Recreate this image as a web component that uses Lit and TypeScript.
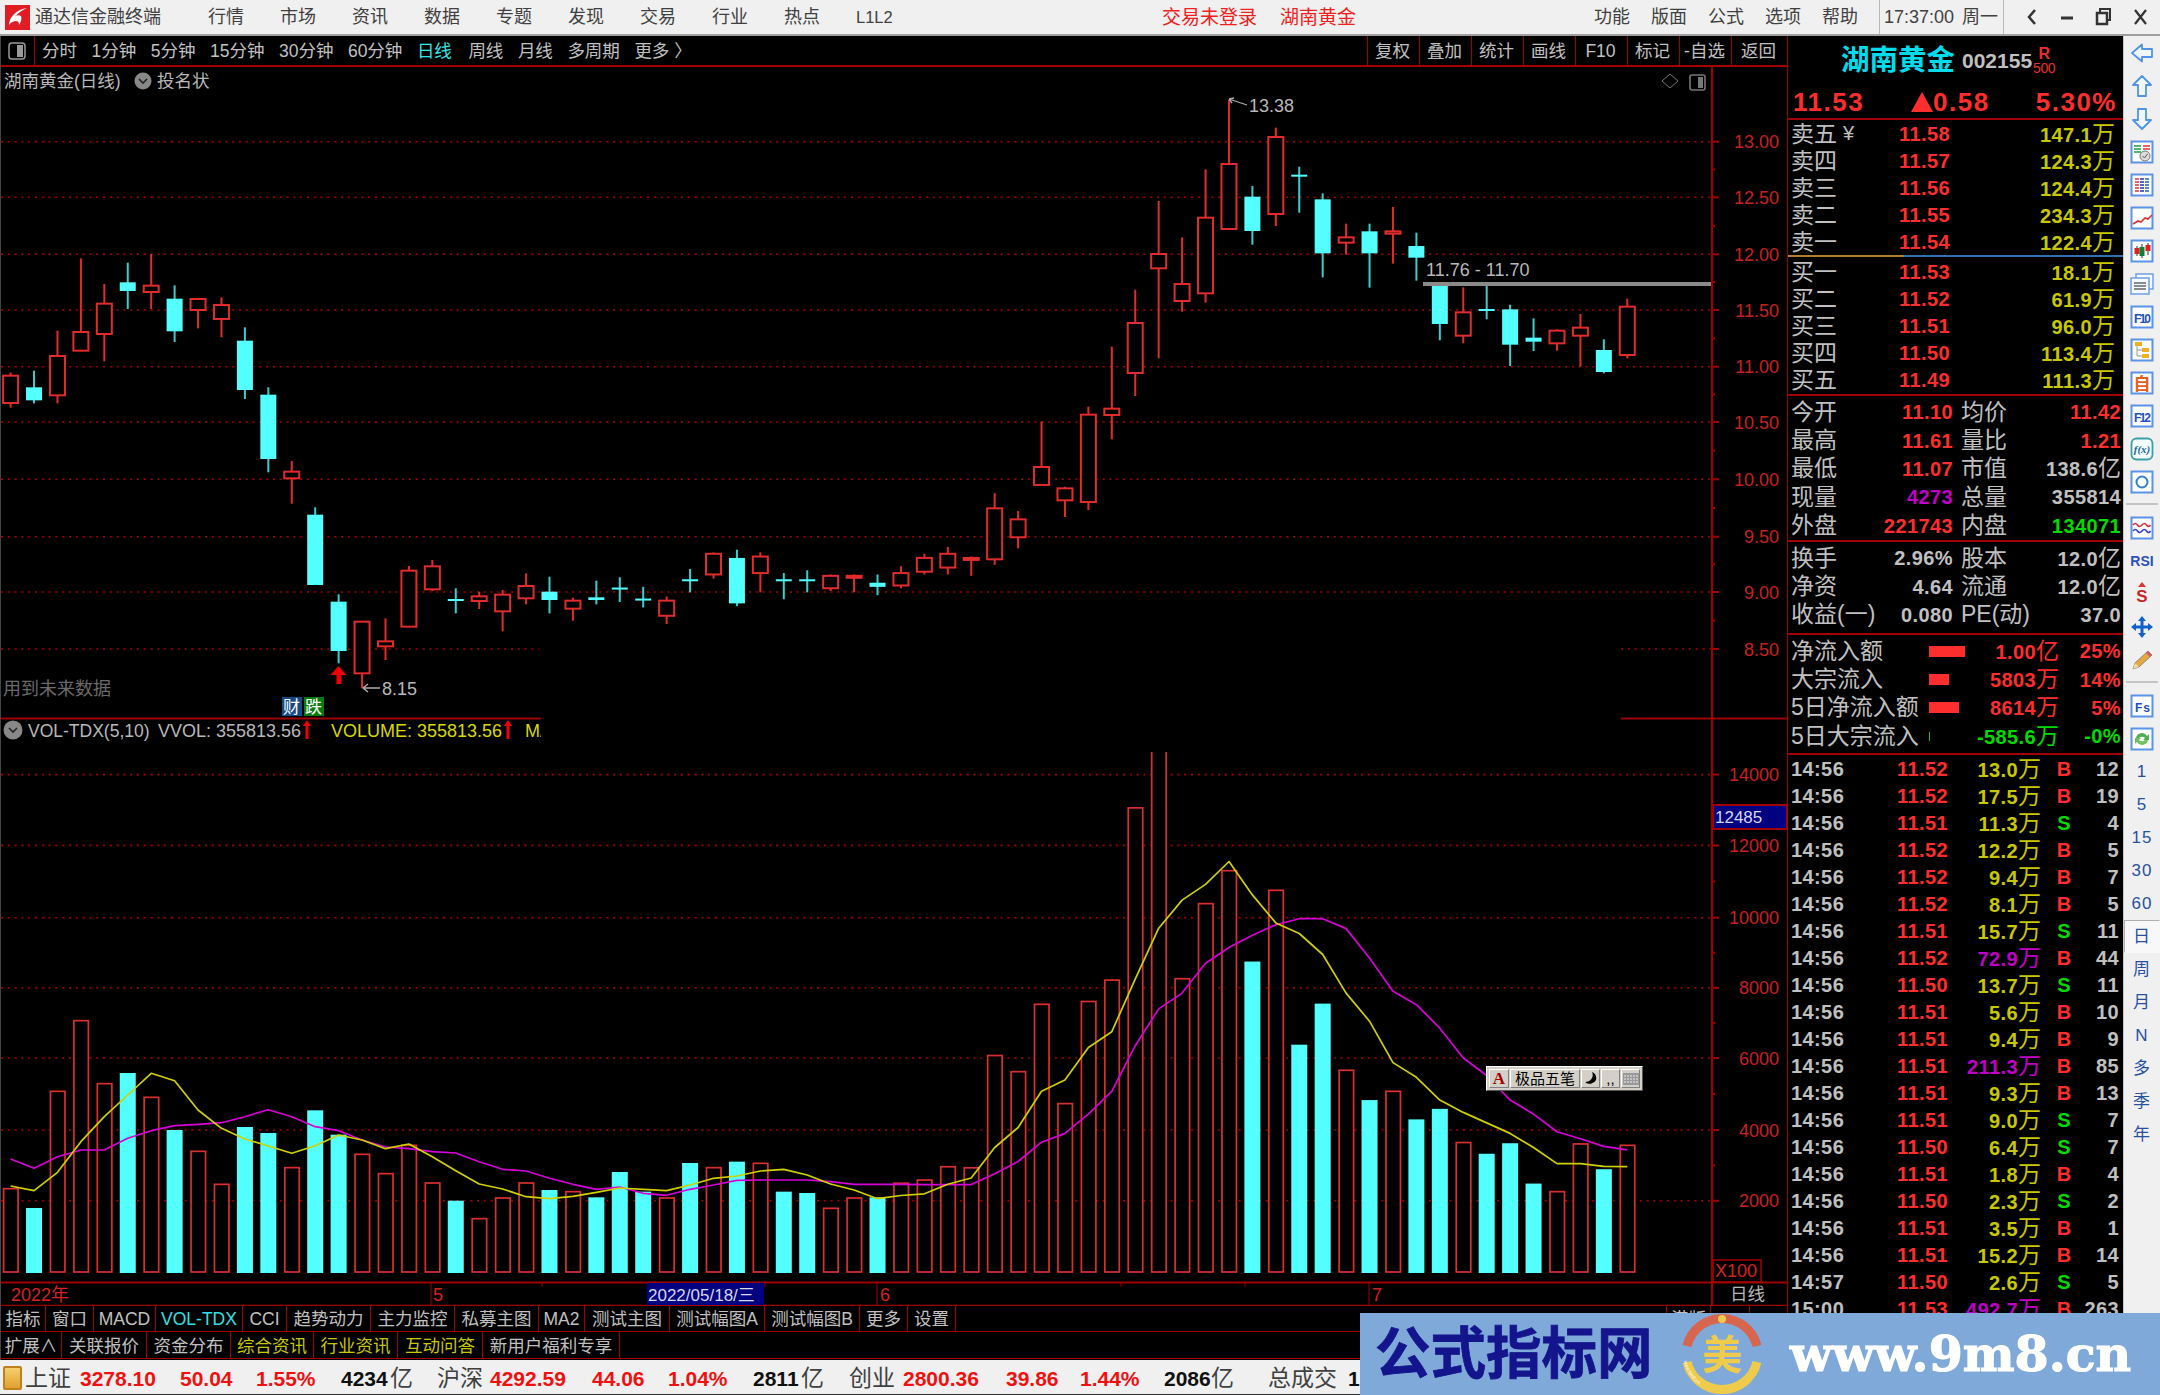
import { LitElement, html, css, svg } from 'lit';
import { customElement } from 'lit/decorators.js';

const z7 = (v: number) => 220 + v / 3;
const z8 = (v: number) => 80 + v / 3;
const sh = (v: number) => v * 1.3776;
type Cd = [number, number, number, number, number];
const cx = (i: number) => 9.6 + 23.43 * i;

// colour flag 1 = cyan (falling), 0 = red (rising); hi, top, bottom, lo
const c7: Cd[] = [
  [0,458,467,549,563],[1,452,502,541,550],[0,332,408,526,550],[0,115,336,392,392],[0,192,251,342,424],
  [1,128,187,213,267],[0,102,197,216,267],[1,196,236,334,366],[0,237,237,270,325],[0,232,255,297,352],
  [1,322,362,510,537],[1,502,524,717,757],[0,723,755,775,851],[1,862,884,1095,1095],[1,1123,1145,1293,1330],
  [0,1205,1205,1360,1405],[0,1195,1264,1279,1320],[0,1038,1052,1220,1220],[0,1020,1039,1108,1113],[1,1105,1137,1139,1180],
  [0,1115,1129,1143,1167],[0,1110,1124,1174,1234],[0,1060,1098,1135,1153],[1,1070,1115,1140,1180],[0,1133,1142,1166,1202],
  [1,1082,1132,1140,1153],
];
const cS: Cd[] = [
  [1,419,426.5,427.5,437],[1,426,434.5,435.5,441],[0,433,436,447,453],[1,413,420.5,421.5,430],[0,401,402,417,420],
  [1,399,405,438,440],[0,401,404,416,430],[1,416,420.5,421.5,435],[1,414,420.5,421.5,430],[0,417,418,427,429],
  [0,417,418,419,430],[1,417,423,426,432],[0,411,416,425,427],[0,402,405,415,417],[0,397,402,412,417],
  [0,404,405,406,418],[0,358,369,406,410],[0,371,377,390,398],[0,306,339,352,352],
];
const c8: Cd[] = [
  [0,1220,1225,1261,1311],[0,980,1004,1266,1290],[0,800,986,1005,1078],[0,629,729,879,948],[0,363,522,565,835],
  [0,472,612,663,695],[0,268,413,640,668],[0,60,252,447,447],[1,318,350,453,494],[0,143,171,402,438],
  [1,260,284,290,398],[1,340,358,520,592],[0,431,472,488,524],[1,431,454,520,623],[0,381,454,461,551],
  [1,458,498,533,602],[1,618,618,732,781],[0,622,697,767,790],[1,618,687,691,718],[1,674,688,794,858],
  [1,715,773,785,813],[0,748,752,790,812],[0,702,743,767,860],[1,778,810,876,880],[0,656,680,825,835],
];
const conv = (a: Cd[], f: (v: number) => number): Cd[] => a.map(c => [c[0], f(c[1]), f(c[2]), f(c[3]), f(c[4])]);
const candles: Cd[] = [...conv(c7, z7), ...conv(cS, sh), ...conv(c8, z8)];

const z9y = (v: number) => 960 + v / 3;
const z10y = (v: number) => 730 + v * 0.3508;
const volA = [686,744,394,182,371,339,412,510,574,673,501,519,623,451,524,583,641,556,669,722,776,714,669,690,695,712,636,695,714,609,623,605,610,695,699,745,714,712].map(z9y);
const volB = [1292,1283,1245,1248,928,974,782,1065,774,713,222,40,709,495,401,660,457,897,780,970,1055,1030,1110,1080,1176,1208,1178,1293,1316,1180,1252,1184].map(z10y);
const vols = [...volA, ...volB];
const maYellow = [...[678,692,637,545,470,405,340,362,450,505,537,558,580,557,525,540,566,552,590,632,672,687,710,716,709,697,684,688,692,675,655,648,633,628,645,672,690,716].map(z9y),
  ...[1327,1322,1295,1277,1190,1133,1030,998,905,860,710,565,485,440,375,470,550,580,640,750,830,948,990,1055,1090,1120,1150,1190,1236,1236,1244,1245].map(z10y)];
const maPurple = [...[597,625,590,570,570,535,512,497,493,488,470,449,470,500,512,540,561,566,575,579,605,628,633,655,673,688,681,700,706,688,675,661,660,660,660,665,673,673].map(z9y),
  ...[1295,1296,1296,1296,1265,1230,1175,1150,1095,1030,900,795,750,665,620,585,555,538,538,566,650,745,783,850,935,985,1055,1095,1145,1165,1187,1197].map(z10y)];

const priceAxis: [string, number][] = [['13.00',141.7],['12.50',197.3],['12.00',254.3],['11.50',310],['11.00',366.7],['10.50',422],['10.00',479.3],['9.50',536.7],['9.00',592],['8.50',649]];
const volAxis: [string, number][] = [['14000',774.6],['12000',845.4],['10000',917.7],['8000',987.8],['6000',1058],['4000',1130],['2000',1200.8]];

const book = {
  sell: [['卖五','11.58','147.1万'],['卖四','11.57','124.3万'],['卖三','11.56','124.4万'],['卖二','11.55','234.3万'],['卖一','11.54','122.4万']],
  buy: [['买一','11.53','18.1万'],['买二','11.52','61.9万'],['买三','11.51','96.0万'],['买四','11.50','113.4万'],['买五','11.49','111.3万']],
};
const info1 = [
  ['今开','11.10','red','均价','11.42','red'],['最高','11.61','red','量比','1.21','red'],['最低','11.07','red','市值','138.6亿','gray'],
  ['现量','4273','mag','总量','355814','gray'],['外盘','221743','red','内盘','134071','grn'],
];
const info2 = [['换手','2.96%','gray','股本','12.0亿','gray'],['净资','4.64','gray','流通','12.0亿','gray'],['收益(一)','0.080','gray','PE(动)','37.0','gray']];
const flows: [string, number, string, string, string][] = [
  ['净流入额',36,'1.00亿','25%','red'],['大宗流入',20,'5803万','14%','red'],['5日净流入额',30,'8614万','5%','red'],['5日大宗流入',1,'-585.6万','-0%','grn'],
];
const trades = [
  ['14:56','11.52','13.0万','B','12'],['14:56','11.52','17.5万','B','19'],['14:56','11.51','11.3万','S','4'],['14:56','11.52','12.2万','B','5'],
  ['14:56','11.52','9.4万','B','7'],['14:56','11.52','8.1万','B','5'],['14:56','11.51','15.7万','S','11'],['14:56','11.52','72.9万','B','44'],
  ['14:56','11.50','13.7万','S','11'],['14:56','11.51','5.6万','B','10'],['14:56','11.51','9.4万','B','9'],['14:56','11.51','211.3万','B','85'],
  ['14:56','11.51','9.3万','B','13'],['14:56','11.51','9.0万','S','7'],['14:56','11.50','6.4万','S','7'],['14:56','11.51','1.8万','B','4'],
  ['14:56','11.50','2.3万','S','2'],['14:56','11.51','3.5万','B','1'],['14:56','11.51','15.2万','B','14'],['14:57','11.50','2.6万','S','5'],['15:00','11.53','492.7万','B','263'],
];
const magentaVols = new Set(['72.9万','211.3万','492.7万']);

const tab1: [string, number, string][] = [['指标',45,''],['窗口',48,''],['MACD',62,''],['VOL-TDX',87,'cy'],['CCI',44,''],['趋势动力',84,''],['主力监控',84,''],['私募主图',84,''],['MA2',46,''],['测试主图',85,''],['测试幅图A',95,''],['测试幅图B',95,''],['更多',48,''],['设置',48,'']];
const tab2: [string, number, string][] = [['扩展∧',61,''],['关联报价',85,''],['资金分布',84,''],['综合资讯',83,'yl'],['行业资讯',84,'yl'],['互动问答',85,'yl'],['新用户福利专享',137,'']];
const status: [string, number, string][] = [['上证',25,'lbl'],['3278.10',80,'r'],['50.04',180,'r'],['1.55%',256,'r'],['4234',341,'k'],['亿',390,'lbl'],['沪深',437,'lbl'],['4292.59',490,'r'],['44.06',592,'r'],['1.04%',668,'r'],['2811',753,'k'],['亿',801,'lbl'],['创业',849,'lbl'],['2800.36',903,'r'],['39.86',1006,'r'],['1.44%',1080,'r'],['2086',1164,'k'],['亿',1211,'lbl'],['总成交',1268,'lbl'],['1',1348,'k']];

const box = (inner: unknown) => svg`<rect x="1.5" y="1.5" width="21" height="21" fill="#fff" stroke="#5b93e6" stroke-width="2"/>${inner}`;
const arrow = (d: string) => svg`<path d=${d} fill="#f2f7ff" stroke="#4e94ea" stroke-width="1.8" stroke-linejoin="round"/>`;
const icons: unknown[] = [
  arrow('M2 12 L12 3.5 V8 H22 V16 H12 V20.5 Z'),
  arrow('M12 2 L21 11 H16 V22 H8 V11 H3 Z'),
  arrow('M12 22 L21 13 H16 V2 H8 V13 H3 Z'),
  box(svg`<path d="M4 6h7M4 9h7M4 12h7" stroke="#1a9a3a" stroke-width="1.6"/><path d="M13 6h7M13 9h7" stroke="#e03030" stroke-width="1.6"/><circle cx="15" cy="16" r="5" fill="#ddd" stroke="#777"/><path d="M12.5 16l2 2 3-4" stroke="#555" fill="none"/>`),
  box(svg`<path d="M5 6h4M5 9h4M5 12h4M5 15h4M5 18h4" stroke="#e03030" stroke-width="1.7" /><path d="M10 6h4M10 9h4M10 12h4M10 15h4M10 18h4" stroke="#2030c0" stroke-width="1.7"/><path d="M15 6h4M15 9h4M15 12h4M15 15h4M15 18h4" stroke="#2060d0" stroke-width="1.7"/>`),
  box(svg`<path d="M3 18l5-3 3 1 4-4 3 1 4-4" fill="none" stroke="#e03030" stroke-width="1.6"/>`),
  box(svg`<path d="M7 7v10M12 5v14M18 4v12" stroke="#333"/><rect x="4.5" y="9" width="5" height="6" fill="#e02020"/><rect x="9.5" y="8" width="5" height="9" fill="#108030"/><rect x="15.5" y="6" width="5" height="6" fill="#e02020"/>`),
  svg`<rect x="6" y="2" width="17" height="15" fill="#f6f9ff" stroke="#6ea0e6" stroke-width="1.5"/><rect x="1" y="6" width="18" height="16" fill="#f6f9ff" stroke="#6ea0e6" stroke-width="1.5"/><path d="M4 11h12M4 14h12M4 17h12" stroke="#666" stroke-width="1.6"/>`,
  box(svg`<text class="ict" x="4" y="17.5" textLength="17">F10</text>`),
  box(svg`<rect x="5" y="4" width="7" height="4" fill="#f0b020"/><path d="M7 8v10h5M7 12h5" stroke="#999" fill="none"/><rect x="12" y="10" width="7" height="4" fill="#f0b020"/><rect x="12" y="16" width="7" height="4" fill="#f0b020"/>`),
  box(svg`<text class="icz" x="12" y="19" text-anchor="middle">自</text>`),
  box(svg`<text class="ict" x="4" y="17.5" textLength="17">F12</text>`),
  svg`<rect x="1.5" y="1.5" width="21" height="21" rx="5" fill="#f4ffff" stroke="#3aa0a8" stroke-width="1.8"/><text class="icf" x="12" y="16" text-anchor="middle">f(x)</text>`,
  box(svg`<circle cx="12" cy="12" r="5.5" fill="none" stroke="#2e7fd8" stroke-width="2"/>`),
  null,
  box(svg`<path d="M3 9q2.5-3 4.5 0t4.5 0 4.5 0 4 0" fill="none" stroke="#e03030" stroke-width="1.6"/><path d="M3 15q2.5-3 4.5 0t4.5 0 4.5 0 4 0" fill="none" stroke="#3040d0" stroke-width="1.6"/>`),
  svg`<text class="icr" x="12" y="17" text-anchor="middle">RSI</text>`,
  svg`<path d="M12 0l4 5h-8z" fill="#e03030"/><text class="ics" x="12" y="20" text-anchor="middle">S</text>`,
  svg`<path d="M12 1l4 5h-2.5v4.5H18V8l5 4-5 4v-2.5h-4.5V18H16l-4 5-4-5h2.5v-4.5H6V16l-5-4 5-4v2.5h4.5V6H8z" fill="#1060d0"/>`,
  svg`<path d="M3 21l2-6L18 3l4 4L9 19z" fill="#e8a840" stroke="#888"/><path d="M3 21l2-6 4 4z" fill="#f4d8a0"/><path d="M18 3l4 4-2 2-4-4z" fill="#d06060"/>`,
  null,
  box(svg`<text class="ict" x="5" y="17.5" textLength="15">Fs</text>`),
  box(svg`<path d="M6 11a6 6 0 0 1 11-2l2-2v6h-6l2-2a4 4 0 0 0-6 0z" fill="#50b050"/><path d="M18 13a6 6 0 0 1-11 2l-2 2v-6h6l-2 2a4 4 0 0 0 6 0z" fill="#70c060"/>`),
];
const sideText = ['1','5','15','30','60','日','周','月','N','多','季','年'];

@customElement('app-root')
export class AppRoot extends LitElement {
  static styles = css`
    :host { display: block; width: 2160px; height: 1395px; overflow: hidden; position: relative; background: #000; line-height: 1;
      font-family: "Liberation Sans", "Noto Sans CJK SC", sans-serif; color: #c0c0c0; }
    * { box-sizing: border-box; }
    .title { height: 36px; background: #f0f0f0; border-bottom: 2px solid #a0a0a0; display: flex; align-items: center; color: #404040; font-size: 18px; padding-left: 5px; }
    .logo { width: 25px; height: 25px; flex: none; display: block; }
    .appname { width: 173px; margin-left: 5px; letter-spacing: 0; }
    .menu { width: 954px; display: flex; gap: 36px; align-items: center; }
    .menu .sm { font-size: 16.5px; }
    .alert { width: 432px; display: flex; gap: 23px; color: #f02020; font-size: 19px; }
    .funcs { width: 285px; display: flex; gap: 21px; }
    .clock { width: 125px; height: 34px; display: flex; align-items: center; gap: 8px; border-left: 1px solid #b8b8b8; border-right: 1px solid #b8b8b8; padding-left: 4px; }
    .win { flex: 1; display: flex; align-items: center; }
    .win svg { display: block; }

    .main { display: flex; height: 1324px; }
    .left { width: 1787px; flex: none; display: flex; flex-direction: column; border-left: 1px solid #444; }
    .bar { height: 31px; flex: none; display: flex; align-items: stretch; border-bottom: 2px solid #a00000; font-size: 17.5px; }
    .bar-ic { width: 34px; border-right: 1px solid #a00000; display: flex; align-items: center; padding-left: 7px; }
    .bar-items { display: flex; gap: 14.5px; align-items: center; padding: 2px 0 0 7px; }
    .on { color: #30e8e8; margin-right: 2px; }
    .bar-btns { margin-left: auto; display: flex; }
    .bar-btns span { width: 52px; border-left: 1px solid #a00000; display: flex; align-items: center; justify-content: center; padding: 2px 2px 0 0; }
    .bar-btns span:last-child { width: 56px; }
    .chart { position: relative; height: 1239px; flex: none; }
    .chart svg { display: block; }
    .ime { position: absolute; left: 1485px; top: 999px; width: 157px; height: 25px; background: #d4d0c8; border: 1px solid; border-color: #fff #555 #555 #fff; display: flex; padding: 2px; gap: 1px; align-items: stretch; color: #000; font-size: 15px; }
    .ime span { border: 1px solid; border-color: #fff #808080 #808080 #fff; display: flex; align-items: center; justify-content: center; }
    .ime .a { width: 20px; color: #a00000; font-weight: bold; font-family: "Liberation Serif", serif; font-size: 17px; }
    .ime .t { width: 70px; }
    .ime .m { width: 19px; }
    .ime .k { flex: 1; }
    .tabs { height: 26px; flex: none; display: flex; border-bottom: 1px solid #a00000; font-size: 17.5px; }
    .tabs.second { height: 27px; }
    .tabs span { border-right: 1px solid #a00000; display: flex; align-items: center; justify-content: center; white-space: nowrap; padding-top: 2px; }
    .tabs.second span { padding-top: 3px; }
    .tabs .cy { color: #30e0e8; }
    .tabs .yl { color: #c8c800; }
    .tabs .gap { flex: 1; border-right: none; }
    .tabs .c1 { width: 45px; border-left: 1px solid #a00000; }
    .tabs .c2 { width: 39px; }
    .tabs .c3 { width: 37px; border-right: none; }

    .panel { width: 336px; flex: none; border-left: 1px solid #a00000; font-size: 23px; overflow: hidden; }
    .p-title { height: 49px; display: flex; align-items: center; padding-left: 53px; }
    .p-name { color: #00dcec; font-size: 28.5px; font-weight: bold; }
    .p-code { font-size: 21px; font-weight: bold; color: #c0c0c0; margin-left: 7px; letter-spacing: 0; }
    .p-rr { display: flex; flex-direction: column; align-items: center; color: #e83030; margin-left: 1px; line-height: 14px; }
    .p-rr b { font-size: 16px; }
    .p-rr i { font-style: normal; font-size: 14px; letter-spacing: -.4px; }
    .p-price { height: 35px; display: grid; grid-template-columns: 118px 124px 82px; padding-left: 5px; align-items: center; border-bottom: 2px solid #a00000; color: #ff2e2e; font-size: 26px; font-weight: bold; letter-spacing: 1.5px; }
    .p-price .mid { display: flex; align-items: center; gap: 0; }
    .tri { width: 0; height: 0; border-left: 11px solid transparent; border-right: 11px solid transparent; border-bottom: 20px solid #ff2e2e; }
    .p-price .end { text-align: right; }
    .row { display: flex; align-items: center; white-space: nowrap; }
    .bk { height: 27px; display: grid; grid-template-columns: 108px 54px 162px; grid-template-rows: 27px; padding-left: 3px; align-items: center; }
    .lbl { display: flex; gap: 6px; align-items: center; }
    .yen { font-size: 20px; margin-top: -2px; }
    .num { font-size: 20px; font-weight: bold; letter-spacing: .4px; white-space: nowrap; }
    .right { justify-self: end; text-align: right; }
    .red { color: #ff2e2e; } .yel { color: #c8c800; } .grn { color: #00dc00; } .mag { color: #c000c8; } .gray { color: #c0c0c0; }
    .wan { font-size: 23px; font-weight: normal; letter-spacing: 0; }
    .sep { height: 2px; background: linear-gradient(to right, #b08030 0 116px, #3070b0 116px); }
    .sec { border-bottom: 2px solid #a00000; }
    .sell { height: 135px; padding-top: .5px; }
    .buy { height: 139px; padding-top: 1.5px; }
    .inf { height: 28.4px; display: grid; grid-template-columns: 162px 160px; grid-template-rows: 28.4px; column-gap: 8px; padding-left: 3px; align-items: center; }
    .inf > div { display: flex; justify-content: space-between; align-items: center; }
    .sec.s1 { height: 146px; padding-top: 2px; }
    .sec.s2 { height: 93px; padding-top: 2px; }
    .sec.s3 { height: 120px; padding-top: 2px; }
    .fl { height: 28.4px; display: grid; grid-template-columns: 138px 52px 78px 62px; grid-template-rows: 28.4px; padding-left: 3px; align-items: center; }
    .flb { height: 11px; background: #ff2e2e; }
    .flb.grn { background: #20c020; height: 9px; }
    .tr { height: 27px; display: grid; grid-template-columns: 62px 95px 93px 46px 32px; grid-template-rows: 27px; padding-left: 3px; align-items: center; }
    .tr .t { font-size: 20px; font-weight: bold; color: #c0c0c0; letter-spacing: .4px; }
    .tr .b { text-align: center; font-size: 20px; font-weight: bold; }
    .trs { padding-top: .5px; }

    .side { flex: 1; background: #f0f0f0; border-left: 1px solid #c8c8c8; display: flex; flex-direction: column; align-items: center; }
    .si { height: 33px; width: 100%; flex: none; display: flex; align-items: center; justify-content: center; }
    .si svg { display: block; width: 24px; height: 24px; }
    .side hr { width: 32px; height: 2px; border: none; background: #c4c4c4; margin: 5px 0 6px; flex: none; }
    .st { color: #2850a0; font-size: 17px; letter-spacing: 1px; }
    .st.sel { background: #f8f8f8; border: 1px solid; border-color: #b0b0b0 #f8f8f8 #f8f8f8 #b0b0b0; }
    .ict { fill: #2050c0; font: bold 12px "Liberation Sans", sans-serif; }
    .icz { fill: #e06020; font: bold 17px "Noto Sans CJK SC", sans-serif; }
    .icf { fill: #206898; font: italic bold 11px "Liberation Serif", serif; }
    .icr { fill: #2e50b8; font: bold 14px "Liberation Sans", sans-serif; }
    .ics { fill: #c02828; font: bold 17px "Liberation Sans", sans-serif; }

    .status { height: 35px; background: #f0f0f0; border-bottom: 1px solid #303030; display: flex; align-items: center; padding: 2px 0 0 3px; overflow: hidden; }
    .sicon { width: 19px; height: 24px; flex: none; background: linear-gradient(#f4d070, #e0a030); border: 2px solid #c08020; border-radius: 2px; margin-right: 3px; }
    .status span { white-space: nowrap; flex: none; }
    .status .lbl { color: #404040; font-size: 23px; }
    .status .r { color: #f01010; font-size: 21px; font-weight: bold; }
    .status .k { color: #101010; font-size: 21px; font-weight: bold; }

    .wm { position: absolute; left: 1360px; top: 1313px; width: 800px; height: 82px; background: #7fa9d9; display: flex; align-items: center; padding-left: 15px; }
    .wm-t { color: #14148c; font-size: 55.5px; font-weight: bold; -webkit-text-stroke: .8px #14148c; width: 280px; flex: none; line-height: 82px; white-space: nowrap; }
    .wm svg { flex: none; margin-left: 26px; display: block; }
    .wm-u { color: #fff; font-family: "DejaVu Serif", serif; font-weight: bold; font-size: 49px; margin-left: 27px; white-space: nowrap; -webkit-text-stroke: 1.2px #fff; }

    text { font-family: "Liberation Sans", "Noto Sans CJK SC", sans-serif; }
    .ax { fill: #c82020; font-size: 18px; }
    .tx { fill: #b8b8b8; font-size: 18px; }
    .txc { fill: #b8b8b8; font-size: 17.5px; }
    .dim { fill: #6a6a6a; font-size: 18px; }
    .yl2 { fill: #d8d800; font-size: 18px; }
    .gy2 { fill: #b8b8b8; font-size: 18px; }
    .gy3 { fill: #b8b8b8; font-size: 17.5px; }
    .dt { fill: #d8d8e8; font-size: 17px; }
    .rd { fill: #d82020; font-size: 18px; }
    .wh { fill: #fff; font-size: 17px; }
    .tiny { fill: #fff; font-size: 5px; }
    .wmc { fill: #eecb4a; font-size: 40px; font-weight: bold; font-family: "Noto Sans CJK SC", sans-serif; }
  `;

  private candleSvg() {
    return candles.map((c, i) => {
      const x = cx(i);
      const col = c[0] ? '#54ffff' : '#e02c2c';
      const wick = c[0] ? '#36d0d0' : '#e02c2c';
      const h = Math.max(c[3] - c[2], 2);
      return svg`
        <line x1=${x} x2=${x} y1=${c[1]} y2=${c[4]} stroke=${wick} stroke-width="2"/>
        ${c[0]
          ? svg`<rect x=${x - 8} y=${c[2]} width="16" height=${h} fill=${col}/>`
          : svg`<rect x=${x - 7.5} y=${c[2]} width="15" height=${h} fill="#000" stroke=${col} stroke-width="2"/>`}`;
    });
  }

  private volSvg() {
    return vols.map((top, i) => {
      const x = cx(i);
      const up = !candles[i][0];
      return up
        ? svg`<rect x=${x - 7} y=${top} width="14.5" height=${1272 - top} fill="#000" stroke="#d83030" stroke-width="1.7"/>`
        : svg`<rect x=${x - 8} y=${top} width="16" height=${1273 - top} fill="#54ffff"/>`;
    });
  }

  private poly(arr: number[], col: string) {
    const pts = arr.map((y, i) => `${cx(i).toFixed(1)},${y.toFixed(1)}`).join(' ');
    return svg`<polyline points=${pts} fill="none" stroke=${col} stroke-width="1.7" stroke-linejoin="round"/>`;
  }

  private chartSvg() {
    const ticks = (a: [string, number][]) => a.map(([t, y], i) => svg`
      <line x1="1711" x2="1718" y1=${y} y2=${y} stroke="#a00000" stroke-width="2"/>
      <text class="ax" x="1778" y=${y + 6.5} text-anchor="end">${t}</text>
      ${i < a.length - 1 ? svg`<line x1="1711" x2="1714" y1=${(y + a[i + 1][1]) / 2} y2=${(y + a[i + 1][1]) / 2} stroke="#a00000" stroke-width="2"/>` : ''}`);
    const grid = (y: number, x1 = 0, x2 = 1710) => svg`<line x1=${x1} x2=${x2} y1=${y} y2=${y} stroke="#a80000" stroke-width="1.6" stroke-dasharray="2 4.8"/>`;
    return svg`
      <svg xmlns="http://www.w3.org/2000/svg" width="1786" height="1239" viewBox="0 67 1786 1239">
        <defs><clipPath id="volclip"><rect x="0" y="752" width="1710" height="530"/></clipPath></defs>
        ${priceAxis.filter(p => p[0] !== '8.50').map(p => grid(p[1]))}
        ${grid(649, 0, 538)}${grid(649, 1620, 1710)}
        ${volAxis.map(p => grid(p[1]))}
        <text class="txc" x="3" y="87">湖南黄金(日线)</text>
        <circle cx="142" cy="81" r="8.5" fill="#888"/><path d="M138 79l4 4 4-4" fill="none" stroke="#222" stroke-width="1.6"/>
        <text class="txc" x="156" y="87">投名状</text>
        <path d="M1669 74l8 7-8 7-8-7z" fill="none" stroke="#777"/>
        <rect x="1689" y="75" width="15" height="15" rx="2" fill="none" stroke="#777" stroke-width="1.6"/><rect x="1697" y="77" width="5" height="11" fill="#777"/>
        <line x1="1711" x2="1711" y1="67" y2="1306" stroke="#a00000" stroke-width="2"/>

        ${this.candleSvg()}
        <line x1="1422" x2="1710" y1="284" y2="284" stroke="#8a8a8a" stroke-width="4"/>
        <text class="tx" x="1425" y="276">11.76 - 11.70</text>
        <path d="M1228 99l5-1m-5 1l3 4m-3-4l18 6" fill="none" stroke="#aaa" stroke-width="1.3"/>
        <text class="tx" x="1248" y="112">13.38</text>
        <path d="M362 688h17M362 688l5-4m-5 4l5 4" fill="none" stroke="#aaa" stroke-width="1.6"/>
        <text class="tx" x="381" y="695">8.15</text>
        <path d="M337.5 666l8 9h-5v9h-5v-9h-6z" fill="#f00000"/>
        <text class="dim" x="2" y="694.5">用到未来数据</text>
        <rect x="281" y="697" width="20" height="19" fill="#154a86"/><text class="wh" x="282" y="713">财</text>
        <rect x="303" y="697" width="20" height="19" fill="#0a7a10"/><text class="wh" x="304" y="713">跌</text>

        <line x1="0" x2="1786" y1="718.5" y2="718.5" stroke="#a00000" stroke-width="2"/>
        <circle cx="12" cy="730" r="9.5" fill="#888"/><path d="M8 728l4 4 4-4" fill="none" stroke="#222" stroke-width="1.6"/>
        <text class="gy3" x="27" y="736.5">VOL-TDX(5,10)</text>
        <text class="gy2" x="157" y="736.5">VVOL: 355813.56</text>
        <path d="M306 720l4 6h-2.5v13h-3v-13H302z" fill="#f00000"/>
        <text class="yl2" x="330" y="736.5">VOLUME: 355813.56</text>
        <path d="M507 720l4 6h-2.5v13h-3v-13H503z" fill="#f00000"/>
        <text class="yl2" x="524" y="736.5">MA5: 294722.63</text>
        <rect x="540" y="705" width="1080" height="40" fill="#000"/>

        <g clip-path="url(#volclip)">${this.volSvg()}${this.poly(maPurple, '#d800d8')}${this.poly(maYellow, '#d0d000')}</g>

        ${ticks(priceAxis)}${ticks(volAxis)}
        <rect x="1712" y="805" width="74" height="24" fill="#000080" stroke="#a00000" stroke-width="2"/>
        <text class="dt" x="1714" y="822.5">12485</text>
        <rect x="1712" y="1260" width="48" height="22" fill="none" stroke="#a00000" stroke-width="1.5"/>
        <text class="rd" x="1714" y="1277">X100</text>

        <line x1="0" x2="1786" y1="1282.5" y2="1282.5" stroke="#a00000" stroke-width="2"/>
        <line x1="0" x2="1786" y1="1305.5" y2="1305.5" stroke="#a00000" stroke-width="1.5"/>
        <rect x="646" y="1283" width="117" height="22" fill="#000080"/>
        <text class="rd" x="10" y="1301">2022年</text>
        <line x1="430" x2="430" y1="1283" y2="1305" stroke="#a00000"/><text class="rd" x="432" y="1301">5</text>
        <text class="dt" x="647" y="1300.5">2022/05/18/三</text>
        <line x1="876" x2="876" y1="1283" y2="1305" stroke="#a00000"/><text class="rd" x="879" y="1301">6</text>
        <line x1="1368" x2="1368" y1="1283" y2="1305" stroke="#a00000"/><text class="rd" x="1371" y="1301">7</text>
        ${[541, 764, 1120, 1244].map(x => svg`<line x1=${x} x2=${x} y1="1283" y2="1287" stroke="#a00000"/>`)}
        <text class="txc" x="1729" y="1300">日线</text>
      </svg>`;
  }

  render() {
    const cell = (row: string[]) => html`
      <div><span>${row[0]}</span><span class="num ${row[2]}">${this.withUnit(row[1])}</span></div>
      <div><span>${row[3]}</span><span class="num ${row[5]}">${this.withUnit(row[4])}</span></div>`;
    return html`
      <div class="title">
        <svg class="logo" viewBox="0 0 25 25"><rect width="25" height="25" fill="#e01c24"/><path d="M22 3C15 4 10 7 6 13c-1 2-2 4-2 7 2-3 5-4 7-4 2 0 3 1 3 4 2-3 3-6 2-9-2-1-3-1-5 0 2-3 6-6 11-8z" fill="#fff"/></svg>
        <div class="appname">通达信金融终端</div>
        <div class="menu">${['行情','市场','资讯','数据','专题','发现','交易','行业','热点'].map(m => html`<span>${m}</span>`)}<span class="sm">L1L2</span></div>
        <div class="alert"><span>交易未登录</span><span>湖南黄金</span></div>
        <div class="funcs">${['功能','版面','公式','选项','帮助'].map(m => html`<span>${m}</span>`)}</div>
        <div class="clock"><span>17:37:00</span><span>周一</span></div>
        <div class="win">
          <svg width="156" height="34" viewBox="0 0 156 34">
            <path d="M31 10l-6 7 6 7" fill="none" stroke="#333" stroke-width="2.5"/>
            <path d="M57 18h12" stroke="#333" stroke-width="3"/>
            <rect x="93" y="13" width="10" height="11" fill="none" stroke="#333" stroke-width="2.5"/><path d="M96 12V9h10v11h-3" fill="none" stroke="#333" stroke-width="2"/>
            <path d="M131 10l11 14M142 10l-11 14" stroke="#333" stroke-width="2.2"/>
          </svg>
        </div>
      </div>
      <div class="main">
        <div class="left">
          <div class="bar">
            <div class="bar-ic"><svg width="18" height="18" viewBox="0 0 18 18"><rect x="1" y="1" width="16" height="16" rx="3" fill="none" stroke="#999" stroke-width="1.5"/><rect x="9" y="3" width="6" height="12" fill="#999"/></svg></div>
            <div class="bar-items">
              ${['分时','1分钟','5分钟','15分钟','30分钟','60分钟'].map(t => html`<span>${t}</span>`)}
              <span class="on">日线</span>
              ${['周线','月线','多周期','更多 〉'].map(t => html`<span>${t}</span>`)}
            </div>
            <div class="bar-btns">${['复权','叠加','统计','画线','F10','标记','-自选','返回'].map(t => html`<span>${t}</span>`)}</div>
          </div>
          <div class="chart">
            ${this.chartSvg()}
            <div class="ime"><span class="a">A</span><span class="t">极品五笔</span><span class="m">
              <svg width="13" height="15" viewBox="0 0 13 15"><path d="M8 1a7 7 0 0 1-7 10 7 7 0 0 0 11-2 7 7 0 0 0-4-8z" fill="#000"/></svg></span><span class="m">,,</span><span class="m k">
              <svg width="16" height="12" viewBox="0 0 16 12"><rect width="16" height="12" fill="#999"/><path d="M1 3h14M1 6h14M1 9h14" stroke="#eee" stroke-dasharray="2 1"/></svg></span></div>
          </div>
          <div class="tabs">${tab1.map(([t, w, c]) => html`<span class=${c} style="width:${w}px">${t}</span>`)}
            <span class="gap"></span><span class="c1">港版</span><span class="c2"></span><span class="c3"></span></div>
          <div class="tabs second">${tab2.map(([t, w, c]) => html`<span class=${c} style="width:${w}px">${t}</span>`)}<span class="gap"></span></div>
        </div>
        <div class="panel">
          <div class="p-title"><span class="p-name">湖南黄金</span><span class="p-code">002155</span><span class="p-rr"><b>R</b><i>500</i></span></div>
          <div class="p-price"><span>11.53</span><span class="mid"><span class="tri"></span><span>0.58</span></span><span class="end">5.30%</span></div>
          <div class="sell">
            ${book.sell.map((r, i) => html`<div class="bk"><span class="lbl">${r[0]}${i === 0 ? html`<span class="yen">¥</span>` : ''}</span><span class="num red">${r[1]}</span><span class="num yel right">${this.withUnit(r[2])}</span></div>`)}
          </div>
          <div class="sep"></div>
          <div class="sec buy">
            ${book.buy.map(r => html`<div class="bk"><span class="lbl">${r[0]}</span><span class="num red">${r[1]}</span><span class="num yel right">${this.withUnit(r[2])}</span></div>`)}
          </div>
          <div class="sec s1">${info1.map(r => html`<div class="inf">${cell(r)}</div>`)}</div>
          <div class="sec s2">${info2.map(r => html`<div class="inf">${cell(r)}</div>`)}</div>
          <div class="sec s3">${flows.map(([l, w, v, p, c]) => html`<div class="fl"><span class="row">${l}</span><span><div class="flb ${c === 'grn' ? 'grn' : ''}" style="width:${w}px"></div></span><span class="num right ${c}">${this.withUnit(v)}</span><span class="num right ${c}">${p}</span></div>`)}</div>
          <div class="trs">${trades.map(t => html`<div class="tr"><span class="t">${t[0]}</span><span class="num red right">${t[1]}</span><span class="num right ${magentaVols.has(t[2]) ? 'mag' : 'yel'}">${this.withUnit(t[2])}</span><span class="b ${t[3] === 'B' ? 'red' : 'grn'}">${t[3]}</span><span class="num gray right">${t[4]}</span></div>`)}</div>
        </div>
        <div class="side">
          ${icons.map(i => i === null ? html`<hr>` : html`<div class="si"><svg viewBox="0 0 24 24">${i}</svg></div>`)}
          ${sideText.map(t => html`<div class="si st ${t === '日' ? 'sel' : ''}">${t}</div>`)}
        </div>
      </div>
      <div class="status"><span class="sicon"></span>
        ${status.map(([t, x, c], i) => html`<span class=${c} style="width:${(i + 1 < status.length ? status[i + 1][1] : x + 14) - x}px">${t}</span>`)}
      </div>
      <div class="wm">
        <div class="wm-t">公式指标网</div>
        <svg width="82" height="82" viewBox="0 0 82 82">
          <path d="M6 33A36 36 0 0 1 76 33" fill="none" stroke="#d8654e" stroke-width="9"/>
          <path d="M6 49A36 36 0 0 0 76 49" fill="none" stroke="#eecb4a" stroke-width="9"/>
          <circle cx="41" cy="6" r="4" fill="#eecb4a"/>
          <text class="wmc" x="41" y="56" text-anchor="middle">美</text>
          <path id="wmarc" d="M3 48A38 38 0 0 0 20 73" fill="none"/>
          <text class="tiny"><textPath href="#wmarc">www.9m8.cn</textPath></text>
        </svg>
        <div class="wm-u">www.9m8.cn</div>
      </div>`;
  }

  private withUnit(v: string) {
    const m = v.match(/^(.*?)([万亿])$/);
    return m ? html`${m[1]}<span class="wan">${m[2]}</span>` : v;
  }
}
